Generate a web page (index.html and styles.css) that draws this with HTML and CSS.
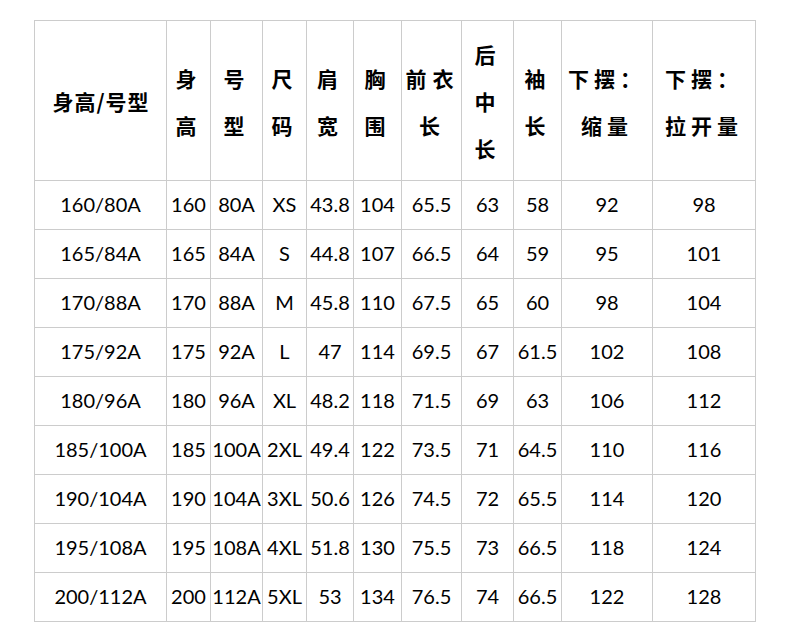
FILE: index.html
```html
<!DOCTYPE html>
<html lang="zh">
<head>
<meta charset="utf-8">
<title>尺码表</title>
<link rel="stylesheet" href="styles.css">
</head>
<body>
<table class="size-table">
  <thead>
    <tr>
      <th class="c1 tight">身高/号型</th>
      <th class="c2">身<br>高</th>
      <th class="c3">号<br>型</th>
      <th class="c4">尺<br>码</th>
      <th class="c5">肩<br>宽</th>
      <th class="c6">胸<br>围</th>
      <th class="c7 wide">前衣<br>长</th>
      <th class="c8">后<br>中<br>长</th>
      <th class="c9">袖<br>长</th>
      <th class="c10">下摆：<br>缩量</th>
      <th class="c11">下摆：<br>拉开量</th>
    </tr>
  </thead>
  <tbody>
    <tr><td>160/80A</td><td>160</td><td>80A</td><td>XS</td><td>43.8</td><td>104</td><td>65.5</td><td>63</td><td>58</td><td>92</td><td>98</td></tr>
    <tr><td>165/84A</td><td>165</td><td>84A</td><td>S</td><td>44.8</td><td>107</td><td>66.5</td><td>64</td><td>59</td><td>95</td><td>101</td></tr>
    <tr><td>170/88A</td><td>170</td><td>88A</td><td>M</td><td>45.8</td><td>110</td><td>67.5</td><td>65</td><td>60</td><td>98</td><td>104</td></tr>
    <tr><td>175/92A</td><td>175</td><td>92A</td><td>L</td><td>47</td><td>114</td><td>69.5</td><td>67</td><td>61.5</td><td>102</td><td>108</td></tr>
    <tr><td>180/96A</td><td>180</td><td>96A</td><td>XL</td><td>48.2</td><td>118</td><td>71.5</td><td>69</td><td>63</td><td>106</td><td>112</td></tr>
    <tr><td>185/100A</td><td>185</td><td>100A</td><td>2XL</td><td>49.4</td><td>122</td><td>73.5</td><td>71</td><td>64.5</td><td>110</td><td>116</td></tr>
    <tr><td>190/104A</td><td>190</td><td>104A</td><td>3XL</td><td>50.6</td><td>126</td><td>74.5</td><td>72</td><td>65.5</td><td>114</td><td>120</td></tr>
    <tr><td>195/108A</td><td>195</td><td>108A</td><td>4XL</td><td>51.8</td><td>130</td><td>75.5</td><td>73</td><td>66.5</td><td>118</td><td>124</td></tr>
    <tr><td>200/112A</td><td>200</td><td>112A</td><td>5XL</td><td>53</td><td>134</td><td>76.5</td><td>74</td><td>66.5</td><td>122</td><td>128</td></tr>
  </tbody>
</table>
</body>
</html>
```

FILE: styles.css
```css
html, body {
  margin: 0;
  padding: 0;
  background: #ffffff;
}

body {
  padding: 20px 0 0 34px;
}

.size-table {
  border-collapse: separate;
  border-spacing: 0;
  table-layout: fixed;
  width: 722px;
  border-top: 1px solid #cccccc;
  border-left: 1px solid #cccccc;
  color: #000000;
}

.size-table th,
.size-table td {
  box-sizing: border-box;
  border-right: 1px solid #cccccc;
  border-bottom: 1px solid #cccccc;
  padding: 0;
  text-align: center;
  vertical-align: middle;
  white-space: nowrap;
}

.size-table th {
  height: 160px;
  font-family: "Noto Sans CJK SC", "Noto Sans", sans-serif;
  font-weight: 700;
  font-size: 21px;
  line-height: 47px;
  letter-spacing: 5px;
  padding-top: 2px;
}

.size-table th.tight {
  letter-spacing: 1px;
  padding-left: 1px;
}

.size-table th.wide {
  letter-spacing: 6px;
  padding-left: 2px;
}

.size-table td {
  height: 49px;
  padding-bottom: 2px;
  font-family: "Lato", "Liberation Sans", sans-serif;
  font-size: 20px;
  font-weight: 400;
}

.c1 { width: 132px; }
.c2 { width: 44px; }
.c3 { width: 52px; }
.c4 { width: 44px; }
.c5 { width: 47px; }
.c6 { width: 48px; }
.c7 { width: 60px; }
.c8 { width: 52px; }
.c9 { width: 48px; }
.c10 { width: 91px; }
.c11 { width: 103px; }
```
